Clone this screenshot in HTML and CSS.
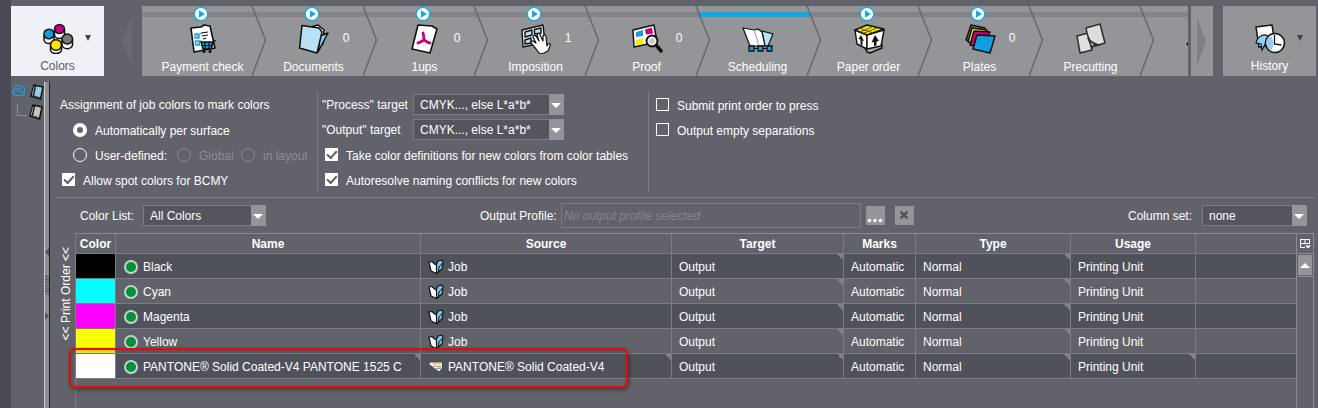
FILE: index.html
```html
<!DOCTYPE html>
<html lang="en">
<head>
<meta charset="utf-8">
<title>Colors</title>
<link rel="stylesheet" href="styles.css">
</head>
<body>
<div class="app">
  <svg class="defs" aria-hidden="true">
    <defs>
      <symbol id="play" viewBox="0 0 16 16"><circle cx="8" cy="8" r="6.8" fill="#fff" stroke="#1ca9e3" stroke-width="1.4"/><path d="M6 4.2 12 8 6 11.8Z" fill="#12a8e4"/></symbol>
      <symbol id="chev" viewBox="0 0 16 70"><path d="M1 0 14.500 34 1 70" fill="none" stroke="#68696e" stroke-width="1.5"/></symbol>
      <symbol id="job" viewBox="0 0 16 16"><path d="M8 6 10 2 14 1 15 3 14 10 8.500 14.500Z" fill="#7cc4e8" stroke="#111" stroke-width="1.200" stroke-linejoin="round"/><path d="M1 3 4 2.500 6.500 5 8.500 6 8.500 14.500 3 12Z" fill="#fff" stroke="#111" stroke-width="1.200" stroke-linejoin="round"/><path d="M10.500 12 11 8 14.500 4" fill="none" stroke="#111"/></symbol>
      <symbol id="page" viewBox="0 0 14 16"><path d="M4 1 13 3 10.500 15 1 12Z" fill="currentColor" stroke="#111" stroke-width="1.500"/><path d="M5.500 2 3 13" stroke="#111" stroke-width="1.500"/><path d="M4.200 3 2.300 11" stroke="#999" stroke-width="1"/><path d="M3 11.500 10 13.500" stroke="#555" stroke-width="1"/></symbol>
    </defs>
  </svg>

  <header class="topbar">
    <button class="big active" type="button">
      <svg class="ico" viewBox="0 0 32 32"><g stroke="#111" stroke-width="1.500">
        <path d="M12.500 7.500v5a5 4 0 0 0 10 0v-5" fill="#fff"/><ellipse cx="17.500" cy="7" rx="5" ry="4.500" fill="#c5007c"/>
        <path d="M2 12.500v5a5 4 0 0 0 10 0v-5" fill="#fff"/><ellipse cx="7" cy="12" rx="5" ry="4.800" fill="#129fe0"/>
        <path d="M20 17.500v5a5 4 0 0 0 10.500 0v-5" fill="#fff"/><ellipse cx="25.300" cy="17" rx="5.300" ry="4.900" fill="#77777a"/>
        <path d="M8.500 24v3.500a5.500 4 0 0 0 11 0V24" fill="#fff"/><ellipse cx="14" cy="23" rx="5.500" ry="5.200" fill="#ffe800"/></g></svg>
      <span class="big-label">Colors</span><span class="caret"></span>
    </button>
    <button class="nav-prev" type="button" aria-label="Scroll left"></button>
    <nav class="flow">
      <a href="#" class="step"><span class="track"></span><svg class="play"><use href="#play"/></svg>
        <svg class="ico" viewBox="0 0 32 32"><path d="M4 6 14 5 17 3 23 4 28 26 7 30Z" fill="#fff" stroke="#111" stroke-width="1.600" stroke-linejoin="round"/><path d="M8 12h4v4H8zM8.500 19h4v4h-4z" fill="none" stroke="#129fe0" stroke-width="1.300"/><path d="m9 13 2 2 3-4M9.500 20l2 2 3-4" fill="none" stroke="#129fe0"/><path d="m14 11 7-1M15 14l6-1M16 17l3-1" stroke="#111" stroke-width="1.200"/><path d="M14 20h12l-2 7h-8Z" fill="#129fe0" stroke="#111" stroke-width="1.400"/><path d="m14 23.500h11M18 20v7M22 20v7M24 27l3-8 2-.5" fill="none" stroke="#111" stroke-width="1.200"/><circle cx="17" cy="29.500" r="1.500" fill="#111"/><circle cx="23" cy="29.500" r="1.500" fill="#111"/></svg>
        <span class="step-label">Payment check</span><svg class="chev"><use href="#chev"/></svg></a>
      <a href="#" class="step"><span class="track"></span><svg class="play"><use href="#play"/></svg>
        <svg class="ico" viewBox="0 0 32 32"><g stroke="#111" stroke-width="1.500" stroke-linejoin="round"><path d="M13 5 20 3 26 8 25 22 18 26Z" fill="#fff"/><path d="m22 14 8-3-10 19Z" fill="#8fcbea"/><path d="M4 3.500 21 6 24 10 19 31 1.500 26Z" fill="#b9e0f3"/></g></svg>
        <span class="count">0</span><span class="step-label">Documents</span><svg class="chev"><use href="#chev"/></svg></a>
      <a href="#" class="step"><span class="track"></span><svg class="play"><use href="#play"/></svg>
        <svg class="ico" viewBox="0 0 32 32"><path d="M9 3 23 4 28 7 21 31 3 27Z" fill="#fff" stroke="#111" stroke-width="1.600" stroke-linejoin="round"/><path d="M14 11c1 3 1 5 1 7-2 1-5 3-6 3M15 18c2 1 4 3 6 3" fill="none" stroke="#c5007c" stroke-width="2.800" stroke-linecap="round"/></svg>
        <span class="count">0</span><span class="step-label">1ups</span><svg class="chev"><use href="#chev"/></svg></a>
      <a href="#" class="step"><span class="track"></span><svg class="play"><use href="#play"/></svg>
        <svg class="ico" viewBox="0 0 32 32"><g stroke="#111" stroke-width="1.400" stroke-linejoin="round"><path d="M2 8 23 3 25 20 3 25Z" fill="#e8eef1"/><path d="m5 10 7-2 0 5-7 2ZM14.500 7.500 21 6v5l-6.500 1Z" fill="#b9e0f3"/><path d="m5 18 6-2v5l-6 1Z" fill="#b9e0f3"/><path d="m16 27-5-6c0-2 2-3 3-1l2 1-3-6c0-2 2-2 3-1l3 5-2-6c1-2 3-2 3 0l3 6 0-5c1-2 3-1 3 1l1 9 1-2c2-1 3 0 2 2l-2 5-4 2-4 1Z" fill="#fff" stroke-width="1.200"/></g></svg>
        <span class="count">1</span><span class="step-label">Imposition</span><svg class="chev"><use href="#chev"/></svg></a>
      <a href="#" class="step"><span class="track"></span>
        <svg class="ico" viewBox="0 0 32 32"><path d="M2 8 23 3 26 20 3 25Z" fill="#fff" stroke="#111" stroke-width="1.500" stroke-linejoin="round"/><path d="m5 10 7-2v6l-7 1Z" fill="#129fe0"/><path d="m14 7.500 7-2 1 6-7 1Z" fill="#c5007c"/><path d="m5 18 7-2v6l-7 1Z" fill="#ffe800"/><circle cx="21" cy="19" r="5.500" fill="#c9c9cc" stroke="#111" stroke-width="1.800"/><circle cx="21" cy="19" r="3.500" fill="none" stroke="#fff"/><path d="m25 23 6 7" stroke="#111" stroke-width="3.500"/></svg>
        <span class="count">0</span><span class="step-label">Proof</span><svg class="chev"><use href="#chev"/></svg></a>
      <a href="#" class="step"><span class="track current"></span>
        <svg class="ico" viewBox="0 0 32 32"><path d="M20 9 31 12 26 24H23Z" fill="#b9e0f3" stroke="#111" stroke-width="1.200"/><path d="M1 6 12 8 16 7 20 10 23 24 8 24Z" fill="#fff" stroke="#111" stroke-width="1.200"/><path d="m12 8 5 16" fill="none" stroke="#999"/><g fill="#129fe0" stroke="#111" stroke-width="1.300"><path d="M7 24h5v5H7zM16 24h5v5h-5zM25 24h5v5h-5z"/></g><path d="M12 26.500h4M21 26.500h4" stroke="#111"/></svg>
        <span class="step-label">Scheduling</span><svg class="chev"><use href="#chev"/></svg></a>
      <a href="#" class="step"><span class="track"></span><svg class="play"><use href="#play"/></svg>
        <svg class="ico" viewBox="0 0 32 32"><g stroke="#111" stroke-width="1.400" stroke-linejoin="round"><path d="m11 24 3 6 3 1 12-5v-4H11Z" fill="#aaaab0"/><path d="m2 8 12 5v14L4 22Z" fill="#fff"/><path d="m14 13 17-5-3 16-14 3Z" fill="#fff"/><path d="M2 8 14 3 31 7 14 13Z" fill="#ffe800"/></g><path d="m7 10 12-5M11 11l13-5M6 6l14 5" stroke="#665c00" stroke-width="1"/><path d="m8 13 3 6-1.500-.5v5l-2-1v-5L5.500 17ZM22 13l4 6-2.500.5v4l-2.500.5v-4l-2.500.5Z" fill="#111"/></svg>
        <span class="step-label">Paper order</span><svg class="chev"><use href="#chev"/></svg></a>
      <a href="#" class="step"><span class="track"></span><svg class="play"><use href="#play"/></svg>
        <svg class="ico" viewBox="0 0 32 32"><g stroke="#111" stroke-width="1.500" stroke-linejoin="round"><path d="M7 3 21 6 15 21 2 18Z" fill="#77777a"/><path d="M8 6 23 8 17 23 4 20Z" fill="#ffe800"/><path d="M10 9 26 10 20 26 6 23Z" fill="#c5007c"/><path d="M13 13 31 14 26 31 9 27Z" fill="#129fe0"/></g></svg>
        <span class="count">0</span><span class="step-label">Plates</span><svg class="chev"><use href="#chev"/></svg></a>
      <a href="#" class="step"><span class="track"></span>
        <svg class="ico" viewBox="0 0 32 32"><g fill="#dedee1" stroke="#2c2c30" stroke-width="1.500" stroke-linejoin="round"><path d="M2 14 13 11 17 28 5 31Z"/><path d="M11 6 25 2 30 21 20 24Q13 20 11 6Z"/><path d="M13 16 17 26 19 23 24 23Q16 21 13 16Z" fill="#b9b9bd"/></g></svg>
        <span class="step-label">Precutting</span><svg class="chev"><use href="#chev"/></svg></a>
      <a href="#" class="step" aria-label="Next step"><span class="track"></span><svg class="ico" viewBox="0 0 32 32"><path d="m2 24-2-2 2-2Z" fill="#111"/></svg></a>
    </nav>
    <button class="nav-next" type="button" aria-label="Scroll right"></button>
    <button class="big history" type="button">
      <svg class="ico" viewBox="0 0 32 32"><path d="M2 5 18 3 21 22 5 25Z" fill="#fff" stroke="#111" stroke-width="1.500"/><path d="M2 21c2-8 9-10 13-6l-7 13-1-6-5-1Z" fill="#8fd0f0" stroke="#111" stroke-width="1.200"/><circle cx="21" cy="21" r="9.500" fill="#fff" stroke="#111" stroke-width="1.600"/><path d="M17 13.500c-6 4-6 11 0 15.500 3-5 3-10 0-15.500Z" fill="#8fd0f0"/><path d="M20.500 13v9l7 1" fill="none" stroke="#111" stroke-width="1.300"/></svg>
      <span class="big-label">History</span><span class="caret"></span>
    </button>
  </header>

  <div class="body">
    <aside class="tree">
      <div class="tree-row"><svg class="folder" viewBox="0 0 15 13"><path d="M3 5V3.500L5 3l1-1.500h3L10 3h3.500v7L12 11.500H4L1 6.500h8l4.500 4.500M3 4.500h7" fill="none" stroke="#129fe0" stroke-width="1.200"/></svg><svg class="page blue"><use href="#page"/></svg></div>
      <div class="tree-row child"><span class="elbow"></span><svg class="page gray"><use href="#page"/></svg></div>
    </aside>
    <div class="splitter">
      <svg class="grip" viewBox="0 0 4 72"><path d="M4 0v8L0 4ZM0 64v8l4-4Z" fill="#55565c"/><path d="M1 27v19M3 28v19" stroke="#55565c" stroke-dasharray="2 1" stroke-width="1.500"/></svg>
    </div>

    <main class="panel">
      <section class="settings">
        <div class="group">
          <div class="row">Assignment of job colors to mark colors</div>
          <div class="row indent"><input type="radio" name="assign" id="auto" checked><label for="auto">Automatically per surface</label></div>
          <div class="row indent"><input type="radio" name="assign" id="user"><label for="user" class="user">User-defined:</label><input type="radio" name="scope" id="global" disabled><label for="global" class="scope">Global</label><input type="radio" name="scope" id="layout" disabled><label for="layout">in layout</label></div>
          <div class="row checks"><input type="checkbox" id="spot" checked><label for="spot">Allow spot colors for BCMY</label></div>
        </div>
        <div class="group ruled">
          <div class="row"><label for="process" class="target">"Process" target</label><span class="select wide"><select id="process"><option>CMYK..., else L*a*b*</option></select></span></div>
          <div class="row"><label for="output" class="target">"Output" target</label><span class="select wide"><select id="output"><option>CMYK..., else L*a*b*</option></select></span></div>
          <div class="row checks"><input type="checkbox" id="take" checked><label for="take">Take color definitions for new colors from color tables</label></div>
          <div class="row checks"><input type="checkbox" id="resolve" checked><label for="resolve">Autoresolve naming conflicts for new colors</label></div>
        </div>
        <div class="group ruled">
          <div class="row checks"><input type="checkbox" id="submit"><label for="submit">Submit print order to press</label></div>
          <div class="row checks"><input type="checkbox" id="empty"><label for="empty">Output empty separations</label></div>
        </div>
      </section>

      <section class="tools">
        <div class="tool"><label for="list" class="list-label">Color List:</label><span class="select medium"><select id="list"><option>All Colors</option></select></span></div>
        <div class="tool profile"><label for="profile" class="profile-label">Output Profile:</label><input type="text" id="profile" placeholder="No output profile selected"><button type="button" class="mini" aria-label="Browse"><svg viewBox="0 0 19 19"><g fill="#fff"><circle cx="3.500" cy="14.500" r="1.700"/><circle cx="9" cy="14.500" r="1.700"/><circle cx="14.500" cy="14.500" r="1.700"/></g></svg></button><button type="button" class="mini clear" aria-label="Clear"><svg viewBox="0 0 19 19"><path d="m5.500 5.500 7 7m0-7-7 7" stroke="#4a4b52" stroke-width="2.200"/></svg></button></div>
        <div class="tool"><label for="colset" class="set-label">Column set:</label><span class="select small"><select id="colset"><option>none</option></select></span></div>
      </section>

      <section class="list">
        <div class="order"><span>&lt;&lt; Print Order &lt;&lt;</span></div>
        <div class="grid">
          <table>
            <colgroup><col class="c-color"><col class="c-name"><col class="c-source"><col class="c-target"><col class="c-marks"><col class="c-type"><col class="c-usage"><col></colgroup>
            <thead><tr><th>Color</th><th>Name</th><th>Source</th><th>Target</th><th>Marks</th><th>Type</th><th>Usage</th><th></th></tr></thead>
            <tbody>
              <tr><td class="black"></td><td><span class="dot"></span>Black</td><td><svg class="src"><use href="#job"/></svg>Job</td><td class="fold">Output</td><td>Automatic</td><td class="fold">Normal</td><td>Printing Unit</td><td></td></tr>
              <tr><td class="cyan"></td><td><span class="dot"></span>Cyan</td><td><svg class="src"><use href="#job"/></svg>Job</td><td class="fold">Output</td><td>Automatic</td><td class="fold">Normal</td><td>Printing Unit</td><td></td></tr>
              <tr><td class="magenta"></td><td><span class="dot"></span>Magenta</td><td><svg class="src"><use href="#job"/></svg>Job</td><td class="fold">Output</td><td>Automatic</td><td class="fold">Normal</td><td>Printing Unit</td><td></td></tr>
              <tr><td class="yellow"></td><td><span class="dot"></span>Yellow</td><td><svg class="src"><use href="#job"/></svg>Job</td><td class="fold">Output</td><td>Automatic</td><td class="fold">Normal</td><td>Printing Unit</td><td></td></tr>
              <tr><td class="white"></td><td class="fold"><span class="dot"></span>PANTONE® Solid Coated-V4 PANTONE 1525 C</td><td class="fold"><svg class="src" viewBox="0 0 16 16"><path d="M1 3h13.500v6L11 13 1 5.500Z" fill="#eee" stroke="#333" stroke-width=".8"/><path d="M5 4.500h8" stroke="#e8c83a" stroke-width="1.500"/><path d="m5 7 8 .5" stroke="#c88" stroke-width="1"/><path d="m8 9.500 5-.5" stroke="#5a8fae" stroke-width="1.200"/></svg>PANTONE® Solid Coated-V4</td><td class="fold">Output</td><td>Automatic</td><td class="fold">Normal</td><td class="fold">Printing Unit</td><td></td></tr>
            </tbody>
          </table>
          <div class="highlight"></div>
        </div>
        <div class="scroll">
          <button type="button" class="columns" aria-label="Choose columns"><svg viewBox="0 0 12 12"><path d="M1.500 1.500h9M1.500 1v8.500M1.500 5.500h9M6 1.500v4M10.500 1v5M1 9.500h5" fill="none" stroke="#fff"/><path d="M6 7.500h6l-3 3Z" fill="#fff"/></svg></button>
          <button type="button" class="up" aria-label="Scroll up"></button>
          <div class="rail"></div>
        </div>
      </section>
    </main>
  </div>
</div>
</body>
</html>
```

FILE: styles.css
```css
* { box-sizing: border-box; }
body { margin: 0; background: #62626a; color: #fff; font: 12px/16px "Liberation Sans", Arial, sans-serif; }
button, input, select { font: inherit; color: inherit; margin: 0; padding: 0; border: 0; border-radius: 0; }
.defs { position: absolute; width: 0; height: 0; }
.app { display: flex; flex-direction: column; min-height: 100vh; border-left: 11px solid #4a4a54; overflow: hidden; }

/* Top bar */
.topbar { display: flex; align-items: stretch; padding: 6px 2px 0 0; }
.big { position: relative; flex: none; width: 93px; height: 70px; padding: 16px 0 0; display: flex; flex-direction: column; align-items: center; background: #949599; color: #fff; }
.big.active { background: #f0f1f6; color: #5c5d63; }
.big-label { margin-top: 4px; }
.caret { position: absolute; right: 13px; top: 29px; border: 3px solid transparent; border-top: 6px solid #404147; border-bottom: 0; }
.ico { width: 32px; height: 32px; flex: none; display: block; }
.nav-prev { flex: none; width: 10px; height: 48px; margin: 11px 10px 0 18px; background: #6a6a70; clip-path: polygon(100% 0, 0 50%, 100% 100%); }
.nav-next { flex: none; width: 22px; margin: 0 10px 0 3px; background: #949599; display: flex; align-items: center; padding-left: 6px; }
.nav-next::before { content: ""; width: 9px; height: 48px; background: #7f8086; clip-path: polygon(0 0, 100% 50%, 0 100%); }
.flow { flex: 1; min-width: 0; display: flex; overflow: hidden; background: #949599; }
.step { position: relative; flex: none; width: 111px; height: 70px; padding: 16px 0 0 10px; display: flex; flex-direction: column; align-items: center; color: #fff; text-decoration: none; }
.step-label { margin-top: 5px; }
.track { position: absolute; left: 2px; top: 6px; width: 111px; height: 5px; background: #838489; }
.step:first-child .track { left: 0; width: 113px; }
.track.current { background: #12a8e4; }
.play { position: absolute; left: 51px; top: 0; width: 16px; height: 16px; }
.chev { position: absolute; left: 109px; top: 0; width: 16px; height: 70px; z-index: 1; }
.count { position: absolute; left: 85px; top: 24px; width: 16px; text-align: center; }

/* Tree and splitter */
.body { flex: 1; display: flex; margin-top: 6px; }
.tree { flex: none; width: 33px; padding-top: 2px; }
.tree-row { display: flex; justify-content: space-between; height: 20px; }
.folder { width: 15px; height: 13px; }
.page { width: 14px; height: 16px; }
.page.blue { color: #8bd0ef; }
.page.gray { color: #c4c4c4; margin-right: 1px; }
.elbow { width: 10px; height: 12px; margin-left: 6px; border: solid #8b8c92; border-width: 0 0 1px 1px; }
.splitter { flex: none; width: 6px; background: #8f9096; border-left: 1px solid #cdced2; border-right: 1px solid #1c1c20; padding-top: 166px; }
.grip { display: block; width: 4px; height: 72px; }

/* Settings */
.panel { flex: 1; min-width: 0; display: flex; flex-direction: column; padding: 0 4px 0 5px; }
.settings { display: grid; grid-template-columns: 262px 331px 1fr; padding: 10px 0 5px; border-bottom: 1px solid #7c7d84; }
.group { display: grid; grid-template-rows: repeat(4, 25px); padding-left: 5px; }
.ruled { border-left: 1px solid #7c7d84; padding-left: 4px; }
.row { display: flex; align-items: center; white-space: nowrap; }
.indent { padding-left: 13px; }
.indent label { margin-left: 8px; }
.indent .user { width: 82px; }
.indent .scope { width: 42px; }
.indent label, .checks label { padding-top: 2px; }
.checks { padding-left: 3px; gap: 8px; }
.group:first-child .checks { padding-left: 2px; gap: 8px; }
input[type="radio"] { appearance: none; width: 14px; height: 14px; border: 1px solid #fff; border-radius: 50%; }
input[type="radio"]:checked { border: 4px solid #fff; }
input[type="radio"]:disabled { border-color: #8b8c92; }
input[type="radio"]:disabled + label { color: #8b8c92; }
input[type="checkbox"] { appearance: none; width: 13px; height: 13px; border: 1px solid #fff; display: grid; place-items: center; }
input[type="checkbox"]:checked { background: #fff; }
input[type="checkbox"]:checked::after { content: ""; width: 4px; height: 8px; border: solid #5d5e66; border-width: 0 2px 2px 0; transform: rotate(42deg) translate(-1px, -1px); }
.target { width: 91px; }
.select { position: relative; display: block; height: 21px; background: #55555e; border: 1px solid #7c7d84; }
.select.wide { width: 151px; }
.select.medium { width: 123px; }
.select.small { width: 105px; }
.select select { appearance: none; width: 100%; height: 100%; padding: 0 18px 0 6px; background: transparent; }
.select::before { content: ""; position: absolute; right: -1px; top: -1px; width: 15px; height: 21px; background: #94959b; pointer-events: none; }
.select::after { content: ""; position: absolute; right: 2px; top: 8px; border: 5px solid transparent; border-top-color: #fff; border-bottom: 0; pointer-events: none; }

/* List toolbar */
.tools { display: flex; justify-content: space-between; align-items: center; padding: 5px 7px 5px 25px; white-space: nowrap; }
.tool { display: flex; align-items: center; gap: 7px; }
.tool.profile { gap: 5px; }
.list-label { width: 56px; }
.profile-label { width: 76px; }
.set-label { width: 67px; }
#profile { width: 300px; height: 25px; padding: 0 2px; background: transparent; border: 1px solid #7c7d7e; }
#profile::placeholder { color: #85868b; font-style: italic; opacity: 1; }
.mini { width: 19px; height: 19px; background: #94959b; }
.mini svg { display: block; width: 19px; height: 19px; }
.clear { margin-left: 5px; }

/* Color table */
.list { flex: 1; display: flex; }
.order { flex: none; width: 20px; padding: 14px 0 0 4px; }
.order span { writing-mode: vertical-rl; transform: rotate(180deg); line-height: 14px; white-space: nowrap; }
.grid { position: relative; flex: 1; min-width: 0; border-left: 1px solid #7c7d84; }
table { width: 100%; table-layout: fixed; border-collapse: separate; border-spacing: 0; border-top: 1px solid #8b8c90; }
.c-color { width: 40px; }
.c-name { width: 305px; }
.c-source { width: 251px; }
.c-target { width: 172px; }
.c-marks { width: 72px; }
.c-type { width: 155px; }
.c-usage { width: 125px; }
th, td { height: 25px; padding: 1px 0 0 7px; border: solid #7c7d84; border-width: 0 1px 1px 0; text-align: left; white-space: nowrap; vertical-align: middle; }
th { height: 20px; padding: 0; text-align: center; font-weight: bold; }
th:last-child, td:last-child { border-right: 0; }
tbody tr:nth-child(odd) { background: #50525b; }
.black { background: #000; }
.cyan { background: #0ff; }
.magenta { background: #f0f; }
.yellow { background: #ff0; }
.white { background: #fff; }
.dot { display: inline-block; width: 14px; height: 14px; margin: 0 5px 0 1px; border: 2px solid #c9d0cc; border-radius: 50%; background: #00913c; vertical-align: -3px; }
.src { width: 16px; height: 16px; margin: -1px 4px -1px 0; vertical-align: -3px; }
.fold { background-image: linear-gradient(to top right, transparent 50%, #7f828a 50%); background-size: 6px 6px; background-repeat: no-repeat; background-position: right top; }
.highlight { position: absolute; left: -7px; top: 115px; width: 559px; height: 40px; border: 2px solid #f00505; border-radius: 6px; box-shadow: 1px 2px 4px rgba(0, 0, 0, .4), inset 1px 2px 4px rgba(0, 0, 0, .2); pointer-events: none; }
.scroll { flex: none; width: 18px; display: flex; flex-direction: column; border: solid #8b8c90; border-width: 1px 1px 0; }
.columns { height: 20px; background: transparent; display: grid; place-items: center; }
.columns svg { width: 12px; height: 12px; }
.up { height: 22px; background: #94959b; border: 1px solid #62626a; outline: 1px solid #8b8c90; outline-offset: 0; display: grid; place-items: center; }
.up::before { content: ""; border: 5px solid transparent; border-bottom-color: #fff; border-top: 0; }
.rail { flex: 1; border-top: 1px solid #8b8c90; }
```
